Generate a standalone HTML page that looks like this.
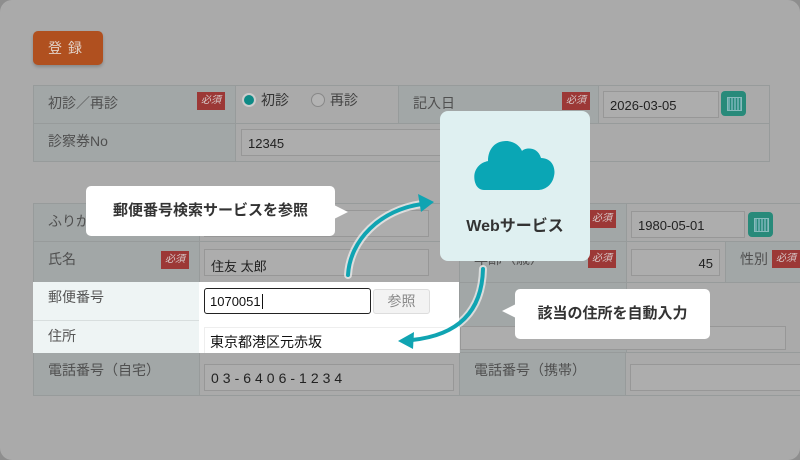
<!DOCTYPE html>
<html><head><meta charset="utf-8"><style>
*{margin:0;padding:0;box-sizing:border-box}
body{width:800px;height:460px;background:#8e8e8e;font-family:"Liberation Sans","Noto Sans CJK JP",sans-serif;position:relative;overflow:hidden}
.card{position:absolute;left:0;top:0;width:800px;height:460px;background:#aaaaaa;border-radius:12px}
.a{position:absolute}
.lab{position:absolute;background:#a2a7a7;border:1px solid #979b9b;color:#505050;font-size:14px;padding:7px 0 0 14px}
.val{position:absolute;background:#aaaaaa;border:1px solid #979b9b}
.inp{position:absolute;background:#adadad;border:1px solid #979797;font-size:13px;color:#222;padding:6px 6px}
.req{position:absolute;background:#9c3836;color:#d8cccc;font-size:10px;width:28px;height:18px;text-align:center;line-height:18px;font-style:italic}
.cal{position:absolute;width:25px;height:25px;background:#288a7a;border-radius:4px}
.cal:after{content:"";position:absolute;left:6px;top:6px;width:13px;height:12px;border:1px solid #8bb;background:repeating-linear-gradient(90deg,#6aa 0 2px,transparent 2px 3px)}
.tip{position:absolute;background:#fff;border-radius:5px;font-weight:bold;font-size:15px;color:#333;text-align:center}
</style></head><body>
<div class="card"></div>
<div class="a" style="left:33px;top:31px;width:70px;height:34px;background:#b0501f;border-radius:5px;color:#e2d2c8;font-size:14px;text-align:center;line-height:34px;letter-spacing:6px;box-shadow:0 2px 3px rgba(0,0,0,.2)">登録</div>

<!-- table1 -->
<div class="lab" style="left:33px;top:85px;width:203px;height:39px">初診／再診</div>
<div class="req" style="left:197px;top:92px">必須</div>
<div class="val" style="left:235px;top:85px;width:164px;height:39px"></div>
<div class="a" style="left:242px;top:93px;width:14px;height:14px;border-radius:50%;background:#0d8a86;border:2px solid #ccc"></div>
<div class="a" style="left:261px;top:90px;font-size:14px;color:#333">初診</div>
<div class="a" style="left:311px;top:93px;width:14px;height:14px;border-radius:50%;background:#b3b3b3;border:1px solid #888"></div>
<div class="a" style="left:330px;top:90px;font-size:14px;color:#444">再診</div>
<div class="lab" style="left:398px;top:85px;width:201px;height:39px">記入日</div>
<div class="req" style="left:562px;top:92px">必須</div>
<div class="val" style="left:598px;top:85px;width:172px;height:39px"></div>
<div class="inp" style="left:603px;top:91px;width:116px;height:27px">2026-03-05</div>
<div class="cal" style="left:721px;top:91px"></div>
<div class="lab" style="left:33px;top:123px;width:203px;height:39px">診察券No</div>
<div class="val" style="left:235px;top:123px;width:535px;height:39px"></div>
<div class="inp" style="left:241px;top:129px;width:260px;height:27px">12345</div>

<!-- table2 -->
<div class="lab" style="left:33px;top:203px;width:167px;height:39px">ふりがな</div>
<div class="val" style="left:199px;top:203px;width:261px;height:39px"></div>
<div class="inp" style="left:204px;top:210px;width:225px;height:27px"></div>
<div class="lab" style="left:33px;top:241px;width:167px;height:42px">氏名</div>
<div class="req" style="left:161px;top:251px">必須</div>
<div class="val" style="left:199px;top:241px;width:261px;height:42px"></div>
<div class="inp" style="left:204px;top:249px;width:225px;height:27px">住友 太郎</div>
<div class="lab" style="left:459px;top:203px;width:168px;height:39px"></div>
<div class="req" style="left:588px;top:210px">必須</div>
<div class="val" style="left:626px;top:203px;width:175px;height:39px"></div>
<div class="inp" style="left:631px;top:211px;width:114px;height:27px">1980-05-01</div>
<div class="cal" style="left:748px;top:212px"></div>
<div class="lab" style="left:459px;top:241px;width:168px;height:42px">年齢（歳）</div>
<div class="req" style="left:588px;top:250px">必須</div>
<div class="val" style="left:626px;top:241px;width:100px;height:42px"></div>
<div class="inp" style="left:631px;top:249px;width:89px;height:27px;text-align:right">45</div>
<div class="lab" style="left:725px;top:241px;width:80px;height:42px">性別</div>
<div class="req" style="left:772px;top:250px">必須</div>
<div class="lab" style="left:459px;top:282px;width:168px;height:72px"></div>
<div class="val" style="left:626px;top:282px;width:175px;height:72px"></div>
<div class="inp" style="left:460px;top:326px;width:326px;height:24px"></div>
<div class="lab" style="left:33px;top:352px;width:167px;height:44px">電話番号（自宅）</div>
<div class="val" style="left:199px;top:352px;width:261px;height:44px"></div>
<div class="inp" style="left:204px;top:364px;width:250px;height:27px;letter-spacing:4px;font-size:14px;padding-top:5px">03-6406-1234</div>
<div class="lab" style="left:459px;top:352px;width:167px;height:44px">電話番号（携帯）</div>
<div class="val" style="left:625px;top:352px;width:176px;height:44px"></div>
<div class="inp" style="left:630px;top:364px;width:172px;height:27px"></div>

<!-- highlighted rows -->
<div class="a" style="left:33px;top:282px;width:166px;height:71px;background:#eef4f4"></div>
<div class="a" style="left:33px;top:320px;width:166px;height:1px;background:#d8dede"></div>
<div class="a" style="left:199px;top:282px;width:260px;height:71px;background:#fff"></div>
<div class="a" style="left:48px;top:287px;font-size:14px;color:#555">郵便番号</div>
<div class="a" style="left:48px;top:326px;font-size:14px;color:#555">住所</div>
<div class="a" style="left:204px;top:288px;width:167px;height:26px;border:1.5px solid #222;border-radius:3px;font-size:13px;padding:5px 5px;color:#111">1070051<span style="border-left:1px solid #111;margin-left:1px"></span></div>
<div class="a" style="left:373px;top:289px;width:57px;height:25px;background:#f3f3f3;border:1px solid #ddd;border-radius:3px;font-size:14px;color:#888;text-align:center;line-height:23px">参照</div>
<div class="a" style="left:204px;top:327px;width:256px;height:26px;border:1px solid #eee;border-bottom:none;font-size:14px;padding:4px 5px;color:#111">東京都港区元赤坂</div>

<!-- popups -->
<div class="a" style="left:440px;top:111px;width:150px;height:150px;background:#dff0f1;border-radius:8px"></div>
<svg class="a" style="left:472px;top:138px" width="85" height="55" viewBox="0 0 85 55">
<path fill="#0aa6b5" d="M12 52 C3 52 1 40 3 34 C6 26 12 24 16 23 C16 10 24 3 34 3 C42 3 48 8 50 13 C54 9 66 9 69 20 C80 20 84 30 82 38 C80 48 72 52 66 52 Z"/>
</svg>
<div class="a" style="left:440px;top:212px;width:150px;text-align:center;font-weight:bold;font-size:16px;color:#333">Webサービス</div>

<div class="tip" style="left:86px;top:186px;width:249px;height:50px;line-height:50px">郵便番号検索サービスを参照</div>
<div class="a" style="left:334px;top:205px;width:0;height:0;border-top:7px solid transparent;border-bottom:7px solid transparent;border-left:14px solid #fff"></div>
<div class="tip" style="left:515px;top:289px;width:195px;height:50px;line-height:50px">該当の住所を自動入力</div>
<div class="a" style="left:502px;top:304px;width:0;height:0;border-top:7px solid transparent;border-bottom:7px solid transparent;border-right:14px solid #fff"></div>

<svg class="a" style="left:0;top:0" width="800" height="460">
<g fill="none" stroke-linecap="round">
<path d="M348 275 C350 240 380 210 422 204" stroke="#fff" stroke-opacity=".6" stroke-width="8"/>
<path d="M348 275 C350 240 380 210 422 204" stroke="#10a4b2" stroke-width="4"/>
<path d="M483 269 C482 310 460 335 412 340" stroke="#fff" stroke-opacity=".6" stroke-width="8"/>
<path d="M483 269 C482 310 460 335 412 340" stroke="#10a4b2" stroke-width="4"/>
</g>
<polygon points="434,202 418,194 421,212" fill="#10a4b2"/>
<polygon points="398,341 414,332 413,349" fill="#10a4b2"/>
</svg>
</body></html>
